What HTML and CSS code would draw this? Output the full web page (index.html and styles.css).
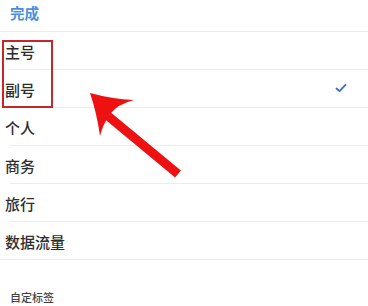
FILE: index.html
```html
<!DOCTYPE html>
<html lang="zh">
<head>
<meta charset="utf-8">
<link rel="stylesheet" href="styles.css">
</head>
<body>
<div class="page">
  <div class="header"><span class="done">完成</span></div>
  <ul class="list">
    <li class="row">主号</li>
    <li class="row">副号<svg class="check" width="12" height="10" viewBox="0 0 12 10"><path d="M1.5 5.5 L4.5 8.2 L10.5 1.8" fill="none" stroke="#3b6fc6" stroke-width="1.8" stroke-linecap="round" stroke-linejoin="round"/></svg></li>
    <li class="row">个人</li>
    <li class="row">商务</li>
    <li class="row">旅行</li>
    <li class="row last">数据流量</li>
  </ul>
  <div class="section-title">自定标签</div>
  <div class="highlight"></div>
  <svg class="arrow" width="368" height="306" viewBox="0 0 368 306">
    <line x1="108" y1="116" x2="178" y2="174" stroke="#ee1111" stroke-width="9" stroke-linecap="butt"/>
    <path d="M90 93 Q112 99 134 100 Q118 104 110 114 Q103 124 100 136 Q97 114 90 93 Z" fill="#ee1111"/>
  </svg>
</div>
</body>
</html>
```
FILE: styles.css
```css
html, body {
  margin: 0;
  padding: 0;
  background: #ffffff;
}
.page {
  position: relative;
  width: 368px;
  height: 306px;
  overflow: hidden;
  font-family: "Noto Sans CJK SC", "Noto Sans", sans-serif;
  color: #333333;
}
.header {
  height: 32px;
  display: flex;
  align-items: center;
  padding-left: 10px;
  border-bottom: 1px solid #ececec;
  box-sizing: border-box;
}
.done {
  color: #4a8fdc;
  font-size: 14.5px;
  font-weight: 700;
  line-height: 1;
  margin-top: -5px;
}
.list {
  list-style: none;
  margin: 0;
  padding: 0;
}
.row {
  position: relative;
  height: 38px;
  box-sizing: border-box;
  display: flex;
  align-items: center;
  justify-content: space-between;
  padding-left: 5px;
  padding-right: 21px;
  font-size: 15px;
  font-weight: 500;
  color: #2e2e2e;
}
.row::after {
  content: "";
  position: absolute;
  left: 10px;
  right: 0;
  bottom: 0;
  border-bottom: 1px solid #ececec;
}
.row.last::after {
  left: 0;
}
.check {
  margin-top: -2px;
}
.section-title {
  margin-top: 30px;
  padding-left: 10px;
  font-size: 11px;
  line-height: 14px;
  font-weight: 500;
  color: #444444;
}
.highlight {
  position: absolute;
  left: 2px;
  top: 40px;
  width: 51px;
  height: 68px;
  box-sizing: border-box;
  border: 2px solid #c4262c;
}
.arrow {
  position: absolute;
  left: 0;
  top: 0;
}
```
